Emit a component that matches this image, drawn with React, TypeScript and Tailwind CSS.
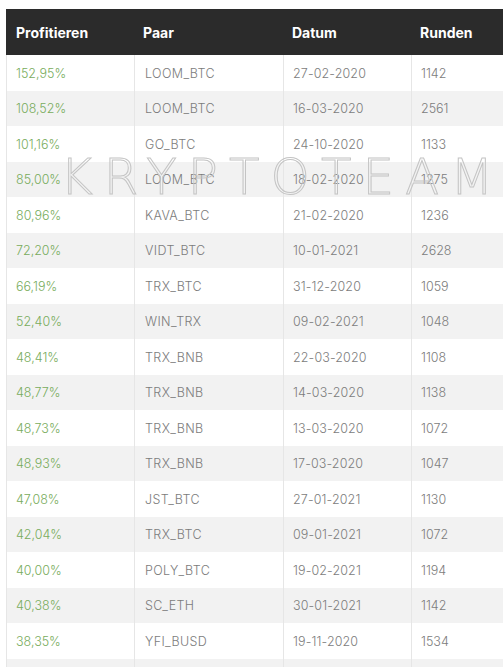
import React from 'react';

const rows: [string, string, string, string][] = [
  ['152,95%', 'LOOM_BTC', '27-02-2020', '1142'],
  ['108,52%', 'LOOM_BTC', '16-03-2020', '2561'],
  ['101,16%', 'GO_BTC', '24-10-2020', '1133'],
  ['85,00%', 'LOOM_BTC', '18-02-2020', '1275'],
  ['80,96%', 'KAVA_BTC', '21-02-2020', '1236'],
  ['72,20%', 'VIDT_BTC', '10-01-2021', '2628'],
  ['66,19%', 'TRX_BTC', '31-12-2020', '1059'],
  ['52,40%', 'WIN_TRX', '09-02-2021', '1048'],
  ['48,41%', 'TRX_BNB', '22-03-2020', '1108'],
  ['48,77%', 'TRX_BNB', '14-03-2020', '1138'],
  ['48,73%', 'TRX_BNB', '13-03-2020', '1072'],
  ['48,93%', 'TRX_BNB', '17-03-2020', '1047'],
  ['47,08%', 'JST_BTC', '27-01-2021', '1130'],
  ['42,04%', 'TRX_BTC', '09-01-2021', '1072'],
  ['40,00%', 'POLY_BTC', '19-02-2021', '1194'],
  ['40,38%', 'SC_ETH', '30-01-2021', '1142'],
  ['38,35%', 'YFI_BUSD', '19-11-2020', '1534'],
  ['', '', '', ''],
];

const cols = 'grid grid-cols-[127px_149px_128px_1fr]';

export default function App() {
  return (
    <div className="relative h-[667px] w-[503px] overflow-hidden bg-white font-['Inter',sans-serif]">
      <div className="pl-[6px] pt-[9px]">
        <div className="w-[520px]">
          <div className={`${cols} h-[46px] items-center bg-[#2b2b2b] pt-[1px] text-[14px] font-bold text-white`}>
            <div className="pl-[10px]">Profitieren</div>
            <div className="pl-[10px]">Paar</div>
            <div className="pl-[10px]">Datum</div>
            <div className="pl-[10px]">Runden</div>
          </div>
          {rows.map((r, i) => (
            <div
              key={i}
              className={`${cols} h-[35.5px] items-center border-l border-[#e6e6e6] text-[12.5px] font-light text-[#7c7c7c] ${
                i % 2 === 1 ? 'bg-[#f2f2f2]' : 'bg-white'
              }`}
            >
              <div className="flex h-full items-center pl-[9px] pt-[3px] text-[#78ac5c]">{r[0]}</div>
              <div className="flex h-full items-center border-l border-[#e6e6e6] pl-[10px] pt-[3px] tracking-[0.03em]">{r[1]}</div>
              <div className="flex h-full items-center border-l border-[#e6e6e6] pl-[9px] pt-[3px] tracking-[0.01em]">{r[2]}</div>
              <div className="flex h-full items-center border-l border-[#e6e6e6] pl-[9px] pt-[3px]">{r[3]}</div>
            </div>
          ))}
        </div>
      </div>
      <div className="pointer-events-none absolute left-[60px] top-[152px] select-none text-[50px] font-thin leading-none tracking-[0.22em] text-transparent [-webkit-text-stroke:1px_#c4c4c4] font-['DejaVu_Sans',sans-serif]">
        KRYPTOTEAM
      </div>
    </div>
  );
}
